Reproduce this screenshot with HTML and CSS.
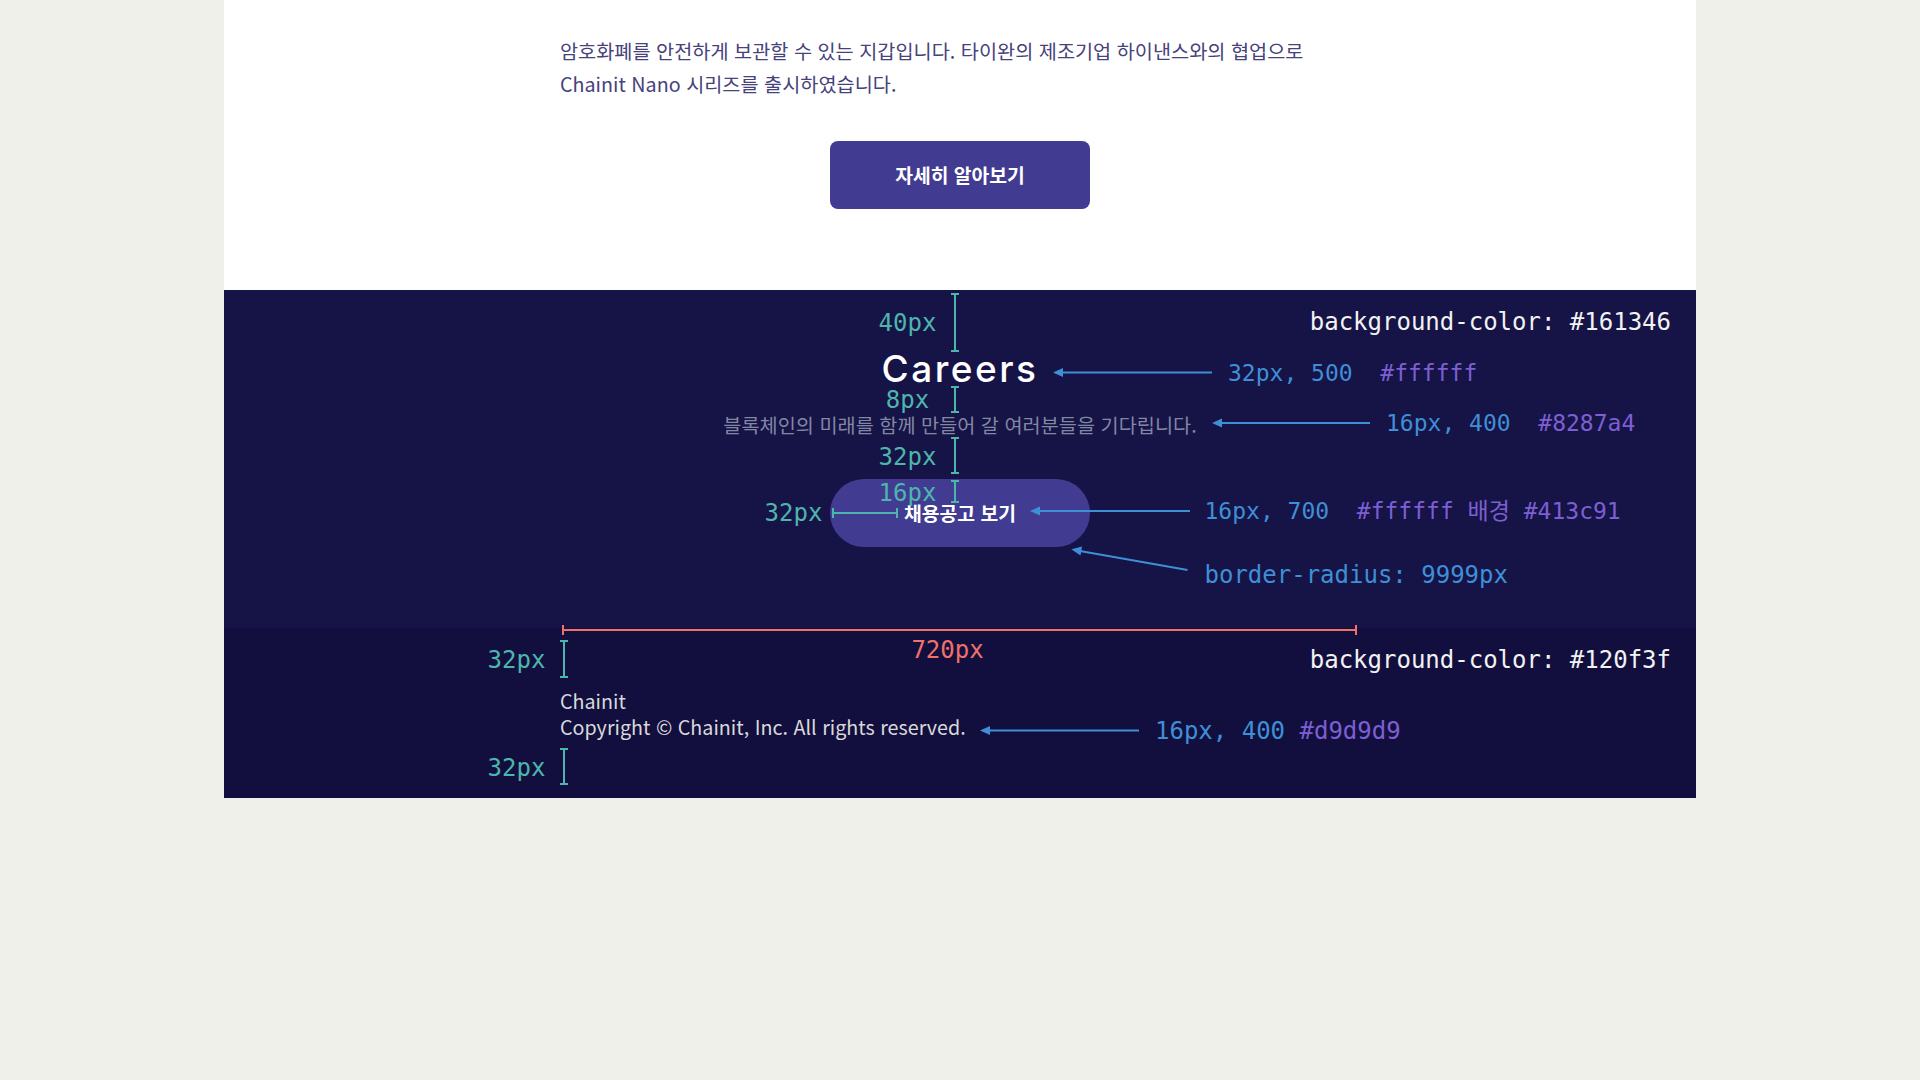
FILE: index.html
```html
<!DOCTYPE html>
<html lang="ko">
<head>
<meta charset="utf-8">
<title>Chainit</title>
<link rel="stylesheet" href="styles.css">
</head>
<body>
<div class="frame">
  <section class="intro">
    <div class="col">
      <p class="intro-text">암호화폐를 안전하게 보관할 수 있는 지갑입니다. 타이완의 제조기업 하이낸스와의 협업으로<br>Chainit Nano 시리즈를 출시하였습니다.</p>
      <a class="btn btn-square" href="#">자세히 알아보기</a>
    </div>
  </section>
  <section class="careers">
    <h2 class="careers-title">Careers</h2>
    <p class="careers-sub">블록체인의 미래를 함께 만들어 갈 여러분들을 기다립니다.</p>
    <a class="btn btn-pill" href="#">채용공고 보기</a>
  </section>
  <footer class="footer">
    <div class="col">
      <div>Chainit</div>
      <div>Copyright © Chainit, Inc. All rights reserved.</div>
    </div>
  </footer>

  <div class="annot">
    <svg class="annot-lines" width="1472" height="798" viewBox="0 0 1472 798">
      <g fill="none" stroke="#4db6ac" stroke-width="2">
        <path d="M727 294H735M731 294V351M727 351H735"/>
        <path d="M727 387H735M731 387V412M727 412H735"/>
        <path d="M727 438H735M731 438V473M727 473H735"/>
        <path d="M727 481H735M731 481V502M727 502H735"/>
        <path d="M609 508V518M609 513H673M673 508V518"/>
        <path d="M336 641H344M340 641V677M336 677H344"/>
        <path d="M336 749H344M340 749V784M336 784H344"/>
      </g>
      <path d="M339 630H1132M339 625V635M1132 625V635" fill="none" stroke="#f07167" stroke-width="2"/>
      <g fill="none" stroke="#3f8fd6" stroke-width="2">
        <path d="M836 372.5H988"/>
        <path d="M995 423H1146"/>
        <path d="M813 511H966"/>
        <path d="M856 551L963.5 570"/>
        <path d="M763 730.5H915"/>
      </g>
      <g fill="#3f8fd6">
        <polygon points="829,372.5 839,368 839,377"/>
        <polygon points="988,423 998,418.5 998,427.5"/>
        <polygon points="806,511 816,506.5 816,515.5"/>
        <polygon points="847.4,549.3 856.5,555.5 858,546.6"/>
        <polygon points="756,730.5 766,726 766,735"/>
      </g>
    </svg>

    <span class="lbl teal ctr a-40">40px</span>
    <span class="lbl teal ctr a-8">8px</span>
    <span class="lbl teal ctr a-32">32px</span>
    <span class="lbl teal ctr a-16">16px</span>
    <span class="lbl teal ctr a-32h">32px</span>
    <span class="lbl teal ctr a-f32a">32px</span>
    <span class="lbl teal ctr a-f32b">32px</span>
    <span class="lbl salmon ctr a-720">720px</span>
    <span class="lbl white a-bg1">background-color: #161346</span>
    <span class="lbl white a-bg2">background-color: #120f3f</span>
    <span class="lbl lbl-sm a-title"><span class="blue">32px, 500</span>  <span class="purple">#ffffff</span></span>
    <span class="lbl lbl-sm a-sub"><span class="blue">16px, 400</span>  <span class="purple">#8287a4</span></span>
    <span class="lbl lbl-sm a-btn"><span class="blue">16px, 700</span>  <span class="purple">#ffffff 배경 #413c91</span></span>
    <span class="lbl blue a-radius">border-radius: 9999px</span>
    <span class="lbl a-copy"><span class="blue">16px, 400</span> <span class="purple">#d9d9d9</span></span>
  </div>
</div>
</body>
</html>
```

FILE: styles.css
```css
html, body {
  margin: 0;
  padding: 0;
}

body {
  background: #f0f0eb;
  font-family: "Noto Sans CJK KR", "Noto Sans", sans-serif;
}

.frame {
  position: relative;
  width: 1472px;
  margin: 0 auto;
}

.col {
  width: 800px;
  margin: 0 auto;
}

/* intro (white) */
.intro {
  background: #ffffff;
  padding: 34px 0 81px;
}

.intro-text {
  margin: 0;
  font-size: 19.7px;
  line-height: 33px;
  color: #46427c;
}

.btn {
  display: flex;
  align-items: center;
  justify-content: center;
  width: 260px;
  height: 68px;
  margin: 41px auto 0;
  background: #413c91;
  color: #ffffff;
  font-size: 19.3px;
  font-weight: 700;
  text-decoration: none;
}

.btn-square {
  border-radius: 8px;
}

.btn-pill {
  border-radius: 9999px;
}

/* careers */
.careers {
  background: #161346;
  padding: 57px 0 81px;
  text-align: center;
}

.careers-title {
  margin: 0;
  font-family: "Inter", "Noto Sans", sans-serif;
  font-weight: 500;
  font-size: 37px;
  line-height: 44px;
  letter-spacing: 2.5px;
  color: #ffffff;
}

.careers-sub {
  margin: 21px 0 0;
  font-size: 19.7px;
  line-height: 26px;
  color: #8287a4;
}

/* footer */
.footer {
  background: #120f3f;
  padding: 60px 0 59px;
  color: #d9d9d9;
  font-size: 19.7px;
  line-height: 25.5px;
}

/* annotation overlay */
.annot {
  position: absolute;
  left: 0;
  top: 0;
  width: 1472px;
  height: 798px;
  pointer-events: none;
}

.annot-lines {
  position: absolute;
  left: 0;
  top: 0;
}

.lbl {
  position: absolute;
  font-family: "DejaVu Sans Mono", "Noto Sans CJK KR", monospace;
  font-size: 24px;
  line-height: 30px;
  white-space: pre;
}

.lbl-sm {
  font-size: 23px;
}

.ctr {
  width: 100px;
  text-align: center;
}

.teal { color: #4db6ac; }
.blue { color: #3f8fd6; }
.purple { color: #7c5fd3; }
.white { color: #f2f2f2; }
.salmon { color: #f07167; }

.a-40 { left: 633.5px; top: 308px; }
.a-8 { left: 633.5px; top: 385px; }
.a-32 { left: 633.5px; top: 442px; }
.a-16 { left: 633.5px; top: 478px; }
.a-32h { left: 519.5px; top: 498px; }
.a-f32a { left: 242.5px; top: 645px; }
.a-f32b { left: 242.5px; top: 753px; }
.a-720 { left: 673.5px; top: 635px; }
.a-bg1 { right: 25px; top: 307px; }
.a-bg2 { right: 25px; top: 645px; }
.a-title { left: 1004px; top: 358px; }
.a-sub { left: 1162px; top: 408px; }
.a-btn { left: 980.5px; top: 496px; }
.a-radius { left: 980.5px; top: 560px; }
.a-copy { left: 931px; top: 716px; }
```
